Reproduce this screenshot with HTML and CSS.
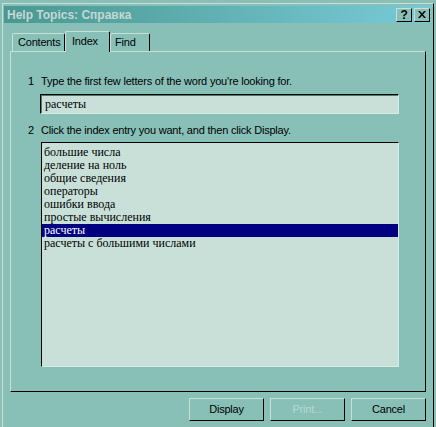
FILE: index.html
```html
<!DOCTYPE html>
<html lang="ru">

<head>
    <meta charset="UTF-8">
    <title>Help Topics: Справка</title>
    <link rel="stylesheet" href="styles.css">
</head>

<body>

    <div class="window">
        <div class="titlebar">
            <span class="title">Help Topics: Справка</span>
            <div class="title-buttons">
                <div class="title-btn">?</div>
                <div class="title-btn close">
                    <svg width="8" height="7" viewBox="0 0 8 7">
                        <path d="M0 0h2l2 2.5 2-2.5h2l-3 3.5 3 3.5h-2l-2-2.5-2 2.5h-2l3-3.5z" fill="#000"/>
                    </svg>
                </div>
            </div>
        </div>

        <div class="dialog">
            <div class="tabs">
                <div class="tab tab-contents">Contents</div>
                <div class="tab tab-index active">Index</div>
                <div class="tab tab-find">Find</div>
            </div>

            <div class="panel">
                <div class="step"><span class="num">1</span>Type the first few letters of the word you're looking for.</div>
                <div class="field">расчеты</div>
                <div class="step step-2"><span class="num">2</span>Click the index entry you want, and then click Display.</div>
                <div class="listbox">
                    <div class="item">большие числа</div>
                    <div class="item">деление на ноль</div>
                    <div class="item">общие сведения</div>
                    <div class="item">операторы</div>
                    <div class="item">ошибки ввода</div>
                    <div class="item">простые вычисления</div>
                    <div class="item selected">расчеты</div>
                    <div class="item">расчеты с большими числами</div>
                </div>
            </div>

            <div class="buttons">
                <div class="btn">Display</div>
                <div class="btn disabled">Print...</div>
                <div class="btn">Cancel</div>
            </div>
        </div>
    </div>

</body>

</html>
```

FILE: styles.css
```css
* {
    margin: 0px;
    box-sizing: border-box;
}

body {
    width: 436px;
    height: 427px;
    overflow: hidden;
    background-color: #88c0b8;
    font-family: "Liberation Sans", Arial, sans-serif;
    font-size: 11px;
    letter-spacing: -0.2px;
    color: #000;
}

.window {
    margin-top: 3px;
    margin-left: 2px;
    width: 432px;
    height: 430px;
    border-top: 1px solid #c8e0d8;
    border-left: 1px solid #c8e0d8;
    border-right: 1px solid #000;
    padding-top: 2px;
}

.titlebar {
    margin-left: 1px;
    width: 427px;
    height: 17px;
    background: linear-gradient(to right, #4a9890, #78cad8);
    display: flex;
    align-items: center;
    justify-content: space-between;
    padding-left: 3px;
}

.title {
    font-size: 12px;
    font-weight: bold;
    letter-spacing: 0px;
    color: #c4d8d4;
}

.title-buttons {
    display: flex;
    gap: 2px;
    margin-right: 1px;
}

.title-btn {
    width: 16px;
    height: 14px;
    background-color: #88c0b8;
    border-top: 1px solid #c8e0d8;
    border-left: 1px solid #c8e0d8;
    border-right: 1px solid #000;
    border-bottom: 1px solid #000;
    display: flex;
    align-items: center;
    justify-content: center;
    font-size: 12px;
    font-weight: bold;
    line-height: 12px;
}

.dialog {
    padding: 8px 7px 0 7px;
}

.tabs {
    display: flex;
    height: 20px;
    padding-left: 2px;
    position: relative;
    z-index: 1;
}

.tab {
    height: 18px;
    margin-top: 2px;
    border-top: 1px solid #c8e0d8;
    border-left: 1px solid #c8e0d8;
    border-right: 1px solid #000;
    border-radius: 2px 2px 0 0;
    background-color: #88c0b8;
    line-height: 17px;
    padding-left: 5px;
}

.tab-contents {
    width: 53px;
}

.tab-index {
    width: 45px;
    padding-left: 6px;
}

.tab-find {
    width: 40px;
    padding-left: 4px;
}

.tab.active {
    height: 21px;
    margin-top: 0px;
    line-height: 19px;
}

.panel {
    height: 341px;
    border-top: 1px solid #c8e0d8;
    border-left: 1px solid #c8e0d8;
    border-right: 1px solid #000;
    border-bottom: 1px solid #000;
    padding-top: 23px;
}

.step {
    height: 13px;
    line-height: 13px;
    padding-left: 17px;
}

.step .num {
    display: inline-block;
    width: 13px;
}

.step-2 {
    margin-top: 10px;
    padding-left: 17px;
}

.field {
    margin-top: 6px;
    margin-left: 29px;
    width: 359px;
    height: 20px;
    background-color: #c8e0d8;
    border-top: 1px solid #000;
    border-left: 1px solid #000;
    border-right: 1px solid #d8ece6;
    border-bottom: 1px solid #d8ece6;
    box-shadow: inset 1px 1px 0 #4a7a74;
    font-family: "Liberation Serif", "Times New Roman", serif;
    font-size: 12px;
    letter-spacing: 0px;
    line-height: 18px;
    padding-left: 4px;
}

.listbox {
    margin-top: 5px;
    margin-left: 30px;
    width: 358px;
    height: 225px;
    background-color: #c8e0d8;
    border-top: 1px solid #000;
    border-left: 1px solid #000;
    border-right: 1px solid #d8ece6;
    border-bottom: 1px solid #d8ece6;
    padding-top: 3px;
    font-family: "Liberation Serif", "Times New Roman", serif;
    font-size: 12px;
    letter-spacing: 0px;
}

.item {
    height: 13px;
    line-height: 13px;
    padding-left: 2px;
}

.item.selected {
    background-color: #000080;
    color: #fff;
}

.buttons {
    display: flex;
    justify-content: flex-end;
    gap: 6px;
    margin-top: 6px;
}

.btn {
    width: 75px;
    height: 23px;
    border-top: 1px solid #c8e0d8;
    border-left: 1px solid #c8e0d8;
    border-right: 1px solid #000;
    border-bottom: 1px solid #000;
    text-align: center;
    line-height: 21px;
}

.btn.disabled {
    color: #b8d8d0;
}
```
